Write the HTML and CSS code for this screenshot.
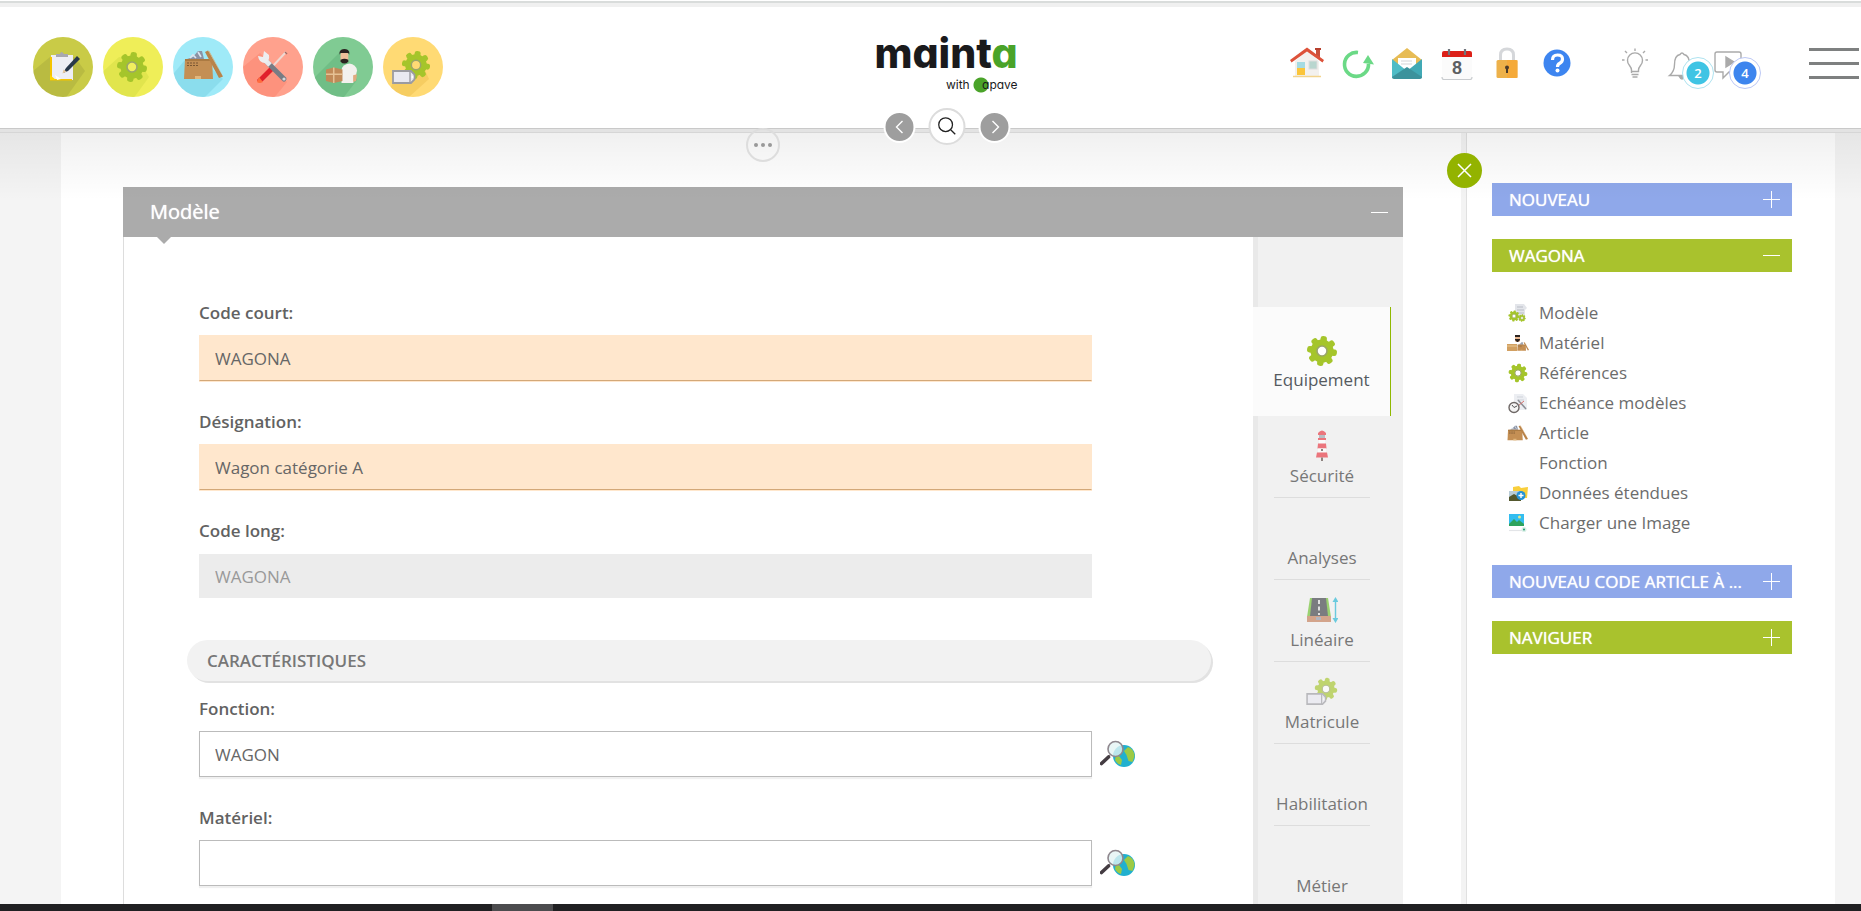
FILE: index.html
```html
<!DOCTYPE html>
<html lang="fr">
<head>
<meta charset="utf-8">
<title>Mainta - Modèle</title>
<link rel="stylesheet" href="styles.css">
</head>
<body>
<svg class="sprite" aria-hidden="true">
  <symbol id="gear" viewBox="0 0 32 32">
    <g fill="#a5c52b">
      <circle cx="16" cy="16" r="11.5"/>
      <g transform="rotate(8 16 16)">
        <rect x="12.8" y="1" width="6.4" height="30" rx="2.6"/>
        <rect x="12.8" y="1" width="6.4" height="30" rx="2.6" transform="rotate(45 16 16)"/>
        <rect x="12.8" y="1" width="6.4" height="30" rx="2.6" transform="rotate(90 16 16)"/>
        <rect x="12.8" y="1" width="6.4" height="30" rx="2.6" transform="rotate(135 16 16)"/>
      </g>
    </g>
    <circle cx="16" cy="16" r="5" fill="var(--hole, #fff)" stroke="#9aa56b" stroke-width="1.6"/>
  </symbol>
  <symbol id="tag" viewBox="0 0 24 14">
    <path d="M1 1h18l3.500 3.500v5L19 13H1z" fill="#e9e9f1" stroke="#9b9ba1" stroke-width="1.8"/>
    <path d="M18 1v12" stroke="#9b9ba1" stroke-width="1.4"/>
    <circle cx="20.500" cy="7" r="1" fill="#fff"/>
  </symbol>
  <symbol id="toolbox" viewBox="0 0 40 30">
    <path d="M4 9l6-2 5-6h4l2 8z" fill="#8a93a5"/>
    <path d="M7 8l3-3 3 3M15 2l3 5" stroke="#dfe5ee" stroke-width="1.6" fill="none"/>
    <path d="M2 9h27l1 20H1z" fill="#c48f54"/>
    <path d="M2 9h27v2H2z" fill="#ab7a42"/>
    <path d="M4 13h12M4 15.500h12" stroke="#7a5733" stroke-width="1.200" stroke-dasharray="2 1"/>
    <rect x="12" y="26" width="6" height="3" fill="#e2b77d"/>
    <path d="M22 2l3-1.500 15 26-4 1.500z" fill="#b98349"/>
    <path d="M25 .5l1.500 1L40 26z" fill="#d8a76a"/>
  </symbol>
  <symbol id="worker" viewBox="0 0 34 36">
    <path d="M17 35V21q1-5 8-6 7 1 8 7l-2 9-2 4z" fill="#f3f1ee"/>
    <path d="M29 27l4-1-1 7-3 1z" fill="#e0ab80"/>
    <rect x="16" y="3" width="8" height="11" rx="3" fill="#efc09a"/>
    <path d="M15 6V3q1-3 5-3t5 3v3l-1-2h-8z" fill="#2b2320"/>
    <path d="M16 11q4-2 8 0v2q-4 4-8 0z" fill="#2b2320"/>
    <path d="M1 21l8-2 9 2v12l-9 2-8-2z" fill="#c18a58"/>
    <path d="M1 26h17M9 19v16" stroke="#e6c194" stroke-width="1.600"/>
  </symbol>
  <symbol id="globe-search" viewBox="0 0 36 28">
    <circle cx="24" cy="16" r="11" fill="#21b0cf"/>
    <path d="M24 11l4-4q6 2 6.500 9l-2 6-4-1-2-6zM16 15l3 1 3 4-1 5q-4-1-6-5z" fill="#9cca45"/>
    <circle cx="15.500" cy="9" r="7.500" fill="#e4f4f4" fill-opacity=".8" stroke="#8f878e" stroke-width="1.600"/>
    <path d="M10 15l-3.500 3.500" stroke="#9b9298" stroke-width="1.600"/>
    <path d="M8.500 17l-7 6.500" stroke="#443c42" stroke-width="3.600" stroke-linecap="round"/>
  </symbol>
</svg>

<header class="topbar">
  <nav class="modules" aria-label="Modules">
    <button class="module module-olive" aria-label="Demandes">
      <svg viewBox="0 0 60 60"><path d="M17 20L0 34v28h32l20-28-10-14z" fill="#000" opacity=".08"/><rect x="18" y="18" width="22" height="25" fill="#eeeef4"/><path d="M17 20h2v22h20v1.500H17z" fill="#f5c400"/><path d="M17 38l6 5h-6z" fill="#ffd500"/><path d="M22 38l6 4-4 1z" fill="#fff"/><path d="M23 19v-2h4q1-4 4 0h4v3H23z" fill="#a8a8b0"/><path d="M30 36l3-5 11-12 3 3-12 12z" fill="#29384a"/><path d="M29.500 36.500l1-4 3 2z" fill="#e6c79c"/></svg>
    </button>
    <button class="module module-yellow" aria-label="Equipements">
      <svg viewBox="0 0 60 60"><path d="M16 20L-4 38v24h34l16-22-10-16z" fill="#7aa800" opacity=".12"/><use href="#gear" x="13" y="14" width="32" height="32"/></svg>
    </button>
    <button class="module module-cyan" aria-label="Articles">
      <svg viewBox="0 0 60 60"><path d="M11 24L-4 42l30 24 24-24-20-18z" fill="#0085a8" opacity=".12"/><use href="#toolbox" x="10" y="13" width="40" height="30"/></svg>
    </button>
    <button class="module module-red" aria-label="Interventions">
      <svg viewBox="0 0 60 60"><path d="M17 16L0 30v32h30l14-17z" fill="#f03c1c" opacity=".14"/><path d="M43 15L29 30" stroke="#efd9d2" stroke-width="2"/><path d="M44 17l-2-2" stroke="#a36a62" stroke-width="1.500"/><path d="M28 29l3 4-11 11q-4 3-6-1z" fill="#e11f2c"/><path d="M16 40l4 5q-4 2-6 0z" fill="#ff6b3d"/><path d="M22 23l19 19" stroke="#777c84" stroke-width="5" stroke-linecap="round"/><path d="M22 23l5 5" stroke="#e8eaed" stroke-width="5"/><path d="M15 19q1 7 7 7 5-2 4-8l-5-4-1 6z" fill="#edeef0"/><circle cx="41" cy="42" r="1.600" fill="#d5d8dc"/></svg>
    </button>
    <button class="module module-green" aria-label="Ressources">
      <svg viewBox="0 0 60 60"><path d="M27 15L-2 44l30 20 16-21-8-18z" fill="#005f2c" opacity=".12"/><use href="#worker" x="12" y="12" width="33" height="35"/></svg>
    </button>
    <button class="module module-amber" aria-label="Matricules">
      <svg viewBox="0 0 60 60"><path d="M11 44l-9 16h24l20-18-10-22z" fill="#c98b00" opacity=".16"/><use href="#gear" x="18" y="13" width="30" height="30"/><use href="#tag" x="9" y="33" width="24" height="14"/></svg>
    </button>
  </nav>

  <a class="logo" href="#" aria-label="Mainta with Apave">
    <span class="logo-name">maint<b>a</b></span>
    <span class="logo-sub">with <span class="apave">apave</span></span>
  </a>

  <nav class="tools" aria-label="Outils">
    <div class="tool-group">
      <a href="#" aria-label="Accueil"><svg viewBox="0 0 36 36"><path d="M6 16L18 6l12 10v15H6z" fill="#f3f1ee"/><path d="M27 5h4v8l-4-3z" fill="#c8503c"/><path d="M1 15L18 2.500 35 15l-1.500 2.500L18 6.500 2.500 17.500z" fill="#dd523a"/><rect x="26" y="3" width="6" height="2" fill="#b7402e"/><rect x="8" y="17" width="8" height="13" fill="#fbc53a"/><rect x="8" y="17" width="8" height="6" fill="#a5dbe2"/><rect x="20" y="16" width="8" height="8" fill="#b9d6cf" stroke="#ddd" stroke-width="1"/><path d="M4 31.500h28" stroke="#f3d48c" stroke-width="1.500"/></svg></a>
      <a href="#" aria-label="Actualiser"><svg viewBox="0 0 36 36"><path d="M19 7.500A12 12 0 1 0 29.500 19" fill="none" stroke="#6bd986" stroke-width="3.600"/><path d="M29 10l6 9.500-11-1.500z" fill="#6bd986"/></svg></a>
      <a href="#" aria-label="Messages"><svg viewBox="0 0 36 36"><path d="M3 15L18 3l15 12v4H3z" fill="#e7bc55"/><path d="M9 13h18v13H9z" fill="#fff"/><path d="M12 16h11M12 19h11" stroke="#d5d5d8" stroke-width="1.200"/><path d="M3 14l15 12L3 33z" fill="#4ebcc6"/><path d="M33 14L18 26l15 7z" fill="#41a9b5"/><path d="M3 32l15-10 15 10q0 2-2 2H5q-2 0-2-2z" fill="#3c929c"/></svg></a>
      <a href="#" aria-label="Calendrier"><svg viewBox="0 0 36 36"><path d="M3 11h30v22q0 1.500-2 1.500H5q-2 0-2-1.500z" fill="#fbfbfb"/><path d="M3 32q0 2.500 2 2.500h26q2 0 2-2.500" fill="none" stroke="#c9cccf" stroke-width="1.200"/><path d="M3 12V8q0-2 2-2h26q2 0 2 2v4z" fill="#dc2018"/><path d="M10 4v6M26 4v6" stroke="#70757c" stroke-width="2.200"/><text x="18" y="29" class="cal-day">8</text></svg></a>
      <a href="#" aria-label="Verrouiller"><svg viewBox="0 0 36 36"><path d="M11.500 17V10q0-6 6.500-6t6.500 6v7" fill="none" stroke="#d5d7da" stroke-width="3"/><rect x="7.500" y="15" width="21" height="18" rx="1.500" fill="#edb14a"/><path d="M18 15h10.500v18H18z" fill="#f8a733" opacity=".7"/><circle cx="18" cy="22.500" r="2" fill="#4b3b2a"/><path d="M17 22h2v6h-2z" fill="#4b3b2a"/></svg></a>
      <a href="#" aria-label="Aide"><svg viewBox="0 0 36 36"><circle cx="18" cy="18" r="13.500" fill="#3d85f0"/><path d="M13.500 15q0-5 5-5t5 4q0 3-3 4.500-2 1-2 3.500" fill="none" stroke="#fff" stroke-width="3.200"/><circle cx="18.500" cy="25.500" r="2" fill="#fff"/></svg></a>
    </div>
    <div class="tool-group notices">
      <a href="#" aria-label="Astuces"><svg viewBox="0 0 36 36" class="line"><path d="M14.500 28v-3q0-2-2-4.500a7.500 7.500 0 1 1 11 0q-2 2.500-2 4.500v1.500h-7M14.500 29.500h7M15.500 32h5"/><path d="M18 3.500v2.500M8 6l2 2M28 6l-2 2M5 15h2.500M28.500 15H31"/></svg></a>
      <a href="#" aria-label="2 notifications"><svg viewBox="0 0 36 36" class="line"><path d="M5.500 30.500h25q-5-4-5-11 0-9-5.500-10-2-3-4 0-5.500 1-5.500 10 0 7-5 11z"/><path d="M15 31q3 6 6 0z" fill="#aaa"/></svg><span class="badge badge-cyan">2</span></a>
      <a href="#" aria-label="4 messages vidéo"><svg viewBox="0 0 36 36" class="line"><path d="M6 7h22q2 0 2 2v16q0 2-2 2H18l-6 6v-6H6q-2 0-2-2V9q0-2 2-2z"/><path d="M15 12l8 5-8 5z" fill="#aaa"/></svg><span class="badge badge-blue">4</span></a>
    </div>
    <button class="burger" aria-label="Menu"><span></span><span></span><span></span></button>
  </nav>

  <div class="pager">
    <button class="pager-btn" aria-label="Précédent"><svg viewBox="0 0 28 28"><path d="M17 8l-6 6 6 6"/></svg></button>
    <button class="search-btn" aria-label="Rechercher"><svg viewBox="0 0 36 36"><circle cx="16.500" cy="16" r="7.500"/><path d="M22 21.500l5 5"/></svg></button>
    <button class="pager-btn" aria-label="Suivant"><svg viewBox="0 0 28 28"><path d="M12 8l6 6-6 6"/></svg></button>
  </div>
</header>

<div class="page">
  <main class="content">
    <button class="more" aria-label="Plus d'actions"><i></i><i></i><i></i></button>
    <section class="panel">
      <div class="panel-head"><h1>Modèle</h1><button class="toggle minus" aria-label="Réduire"></button></div>
      <div class="panel-body">
        <form class="form">
          <div class="field required"><label for="code">Code court:</label><input id="code" type="text" value="WAGONA"></div>
          <div class="field required"><label for="designation">Désignation:</label><input id="designation" type="text" value="Wagon catégorie A"></div>
          <div class="field"><label for="long">Code long:</label><input id="long" type="text" value="WAGONA" disabled></div>
          <h2 class="section">CARACTÉRISTIQUES</h2>
          <div class="field"><label for="fonction">Fonction:</label><input id="fonction" type="text" value="WAGON"><button type="button" class="lookup" aria-label="Rechercher une fonction"><svg viewBox="0 0 36 28"><use href="#globe-search"/></svg></button></div>
          <div class="field"><label for="materiel">Matériel:</label><input id="materiel" type="text" value=""><button type="button" class="lookup" aria-label="Rechercher un matériel"><svg viewBox="0 0 36 28"><use href="#globe-search"/></svg></button></div>
        </form>
        <nav class="tabs" aria-label="Onglets">
          <a href="#" class="tab active"><span class="tab-icon"><svg viewBox="0 0 32 32"><use href="#gear"/></svg></span>Equipement</a>
          <a href="#" class="tab"><span class="tab-icon"><svg viewBox="0 0 32 32"><path d="M12 4q4-5 8 0v2h-8z" fill="#e8343f"/><path d="M13 6h6v3h-6z" fill="#9aa3ad"/><path d="M12 9h8v2h-8z" fill="#e8343f"/><path d="M13 11h6v4h-6z" fill="#fff"/><path d="M12 14.500h8l.5 5h-9z" fill="#e8343f"/><path d="M12 19.500h8v4h-8z" fill="#fff"/><path d="M11 23.500h10l1 5H10z" fill="#e8343f"/><path d="M15 20h2v2h-2zM15 28.500h2V32h-2z" fill="#5b4a45"/></svg></span>Sécurité</a>
          <a href="#" class="tab"><span class="tab-icon"></span>Analyses</a>
          <a href="#" class="tab"><span class="tab-icon"><svg viewBox="0 0 32 32"><path d="M4 5h18l3 19H1z" fill="#6cc12c"/><path d="M6 5h14l2 18H4z" fill="#3c3f44"/><path d="M13 7v15" stroke="#fff" stroke-width="1.600" stroke-dasharray="4 2.500"/><path d="M1 23h24v6H1z" fill="#c47b55"/><path d="M10 24h5v3h-5z" fill="#9198a6"/><path d="M29.500 8v17" stroke="#22b6d4" stroke-width="1.400"/><path d="M26.500 9l3-5 3 5zM26.500 25l3 5 3-5z" fill="#22b6d4"/></svg></span>Linéaire</a>
          <a href="#" class="tab"><span class="tab-icon"><svg viewBox="0 0 32 32"><use href="#gear" x="8" y="2" width="24" height="24"/><use href="#tag" x="0" y="18" width="21" height="12"/></svg></span>Matricule</a>
          <a href="#" class="tab"><span class="tab-icon"></span>Habilitation</a>
          <a href="#" class="tab"><span class="tab-icon"></span>Métier</a>
        </nav>
      </div>
    </section>
  </main>

  <aside class="side">
    <button class="close" aria-label="Fermer"><svg viewBox="0 0 35 35"><path d="M11 11l13 13M24 11L11 24"/></svg></button>
    <button class="bar blue"><span>NOUVEAU</span><i class="toggle plus"></i></button>
    <button class="bar green"><span>WAGONA</span><i class="toggle minus"></i></button>
    <ul class="links">
      <li><a href="#"><svg viewBox="0 0 22 22"><path d="M8 2h9l3 4-2 2v10H8z" fill="#e3e5ea"/><path d="M10 5h6M10 8h7M10 11h7" stroke="#b9bdc6" stroke-width="1"/><use href="#gear" x="1" y="8" width="12" height="12"/><use href="#gear" x="11" y="12" width="8" height="8"/></svg>Modèle</a></li>
      <li><a href="#"><svg viewBox="0 0 22 22"><rect x="8" y="3" width="5" height="7" rx="1.500" fill="#e8b68f"/><path d="M8 5V3h5v2zM8 7h5v1l-2 2h-1L8 8z" fill="#2b2320"/><path d="M0 12h10v7H0z" fill="#d2a061"/><path d="M0 14h10" stroke="#eac892"/><use href="#toolbox" x="10" y="10" width="12" height="9"/></svg>Matériel</a></li>
      <li><a href="#"><svg viewBox="0 0 22 22"><use href="#gear" x="1" y="1" width="20" height="20"/></svg>Références</a></li>
      <li><a href="#"><svg viewBox="0 0 22 22"><path d="M7 2h9l4 4v12H7z" fill="#eceef2"/><path d="M10 5h6M10 8h7" stroke="#cfd3da"/><path d="M11 8l8 9" stroke="#8d8f96" stroke-width="1.500"/><path d="M17 9l-6 5" stroke="#d9716d" stroke-width="1"/><circle cx="7" cy="15.500" r="5" fill="#f4f4f4" stroke="#6e6866" stroke-width="1.400"/><path d="M5 13l2 2.500 3-1.500" fill="none" stroke="#555"/></svg>Echéance modèles</a></li>
      <li><a href="#"><svg viewBox="0 0 22 22"><use href="#toolbox" x="0" y="3" width="21" height="16"/></svg>Article</a></li>
      <li><a href="#"><svg viewBox="0 0 22 22"></svg>Fonction</a></li>
      <li><a href="#"><svg viewBox="0 0 22 22"><path d="M6 5l6-1 2 2 7-1-1 11H6z" fill="#f9cf3c"/><rect x="2" y="9" width="12" height="10" fill="#b9cdd8"/><path d="M2 15l5-3 7 4v3H2z" fill="#54582e"/><circle cx="14" cy="13.500" r="4.500" fill="#2492d6"/><path d="M14 11v5M11.500 13.500h5" stroke="#fff" stroke-width="1.400"/></svg>Données étendues</a></li>
      <li><a href="#"><svg viewBox="0 0 22 22"><path d="M2 2h15v12H2z" fill="#33bdf0"/><path d="M2 14v-2l5-5 3 3 2-2 5 4v2z" fill="#2fa35c"/><circle cx="12.500" cy="5" r="1.500" fill="#e4e98a"/><path d="M2 18.500h13" stroke="#e3e5e8" stroke-width="1.200"/><circle cx="17" cy="17.500" r="2.500" fill="#d9efe6"/><circle cx="17" cy="17.500" r="1" fill="#1f9c70"/></svg>Charger une Image</a></li>
    </ul>
    <button class="bar blue"><span>NOUVEAU CODE ARTICLE À ...</span><i class="toggle plus"></i></button>
    <button class="bar green"><span>NAVIGUER</span><i class="toggle plus"></i></button>
  </aside>
</div>
<footer class="strip"><span></span></footer>
</body>
</html>
```

FILE: styles.css
```css
* { box-sizing: border-box; }

body {
  margin: 0;
  height: 100vh;
  overflow: hidden;
  display: grid;
  grid-template-rows: auto minmax(0, 1fr) 7px;
  font: 17px/24px "Open Sans", "Noto Sans", sans-serif;
  color: #666;
  background: #f4f4f4;
}

button, input { font: inherit; color: inherit; }
button { padding: 0; border: 0; background: none; cursor: pointer; }
a { color: inherit; text-decoration: none; }
svg { display: block; }
h1, h2, ul { margin: 0; padding: 0; font: inherit; list-style: none; }
.sprite { position: absolute; width: 0; height: 0; }

/* Header */
.topbar {
  position: relative;
  z-index: 2;
  height: 129px;
  display: grid;
  grid-template-columns: 1fr auto 1fr;
  align-items: center;
  padding: 6px 2px 0 33px;
  background: linear-gradient(#fff 1px, #d9dcdb 1px, #d9dcdb 3px, #f0f0f0 3px, #f0f0f0 7px, #fff 7px);
  border-bottom: 1px solid #c9c9c9;
  box-shadow: 0 4px 0 #e3e3e3;
}
.topbar::after {
  content: "";
  position: absolute;
  left: 0;
  right: 0;
  top: 132px;
  height: 68px;
  background: linear-gradient(rgba(0, 0, 0, .06), transparent);
  pointer-events: none;
}
.modules { display: flex; gap: 10px; }
.module { width: 60px; height: 60px; border-radius: 50%; overflow: hidden; }
.module svg { width: 60px; height: 60px; }
.module-olive { background: #c9cb47; }
.module-yellow { background: #efee58; --hole: #f1ef5f; }
.module-cyan { background: #9feaf8; }
.module-red { background: #ffa18d; }
.module-green { background: #80cb93; }
.module-amber { background: #ffda74; --hole: #ffda74; }

.logo { display: flex; flex-direction: column; padding-bottom: 13px; color: #1a1a1c; }
.logo-name {
  font: 800 41px/48px Inter, "Open Sans", sans-serif;
  font-feature-settings: "cv11";
}
.logo-name b { font-weight: inherit; color: #4aa329; }
.logo-sub {
  align-self: flex-end;
  font: 12px/16px Inter, sans-serif;
  font-feature-settings: "cv11";
}
.apave {
  display: inline-block;
  padding-left: 9px;
  background: radial-gradient(circle at 8px 8px, #4aa329 7px, transparent 8px);
}

.tools { display: flex; justify-content: flex-end; align-items: center; padding-bottom: 8px; }
.tool-group { display: flex; gap: 14px; }
.tool-group a { position: relative; }
.tool-group svg { width: 36px; height: 36px; }
.notices { gap: 11px; margin: 0 62px 0 42px; }
.line { fill: none; stroke: #aaa; stroke-width: 1.4; }
.cal-day { font: 700 18px "Liberation Sans", sans-serif; text-anchor: middle; fill: #5d5f63; }
.badge {
  position: absolute;
  left: 18px;
  top: 12px;
  width: 32px;
  height: 32px;
  border: 1px solid;
  border-radius: 50%;
  background: radial-gradient(circle, var(--fill) 11px, #fff 12px);
  color: #fff;
  font: 600 13px/30px "Open Sans", sans-serif;
  text-align: center;
}
.badge-cyan { --fill: #3fc4e4; border-color: #aee3f0; }
.badge-blue { --fill: #3d85ee; border-color: #bcc8f5; }
.burger { display: grid; gap: 11px; width: 50px; }
.burger span { height: 3px; background: #7e8080; }

.pager {
  position: absolute;
  z-index: 1;
  left: calc(50% + 16px);
  bottom: -17px;
  transform: translateX(-50%);
  display: flex;
  align-items: center;
  gap: 13px;
}
.pager-btn {
  width: 32px;
  height: 32px;
  border: 2px solid #fff;
  border-radius: 50%;
  background: #9e9e9e;
}
.search-btn {
  width: 37px;
  height: 37px;
  border: 2px solid #dcdcdc;
  border-radius: 50%;
  background: #fff;
}
.pager svg { width: 100%; fill: none; stroke: #fff; stroke-width: 1.4; }
.pager .search-btn svg { stroke: #222; }

/* Page */
.page {
  min-height: 0;
  display: flex;
  margin: 0 26px 0 61px;
  background: #fff;
}
.content { flex: 1; padding: 0 58px 0 62px; }
.more {
  position: relative;
  z-index: 3;
  display: flex;
  align-items: center;
  justify-content: center;
  gap: 3px;
  width: 34px;
  height: 34px;
  margin: -1px auto 25px;
  border: 2px solid #ddd;
  border-radius: 50%;
}
.more i { width: 4px; height: 4px; border-radius: 50%; background: #999; }

.panel-head {
  position: relative;
  display: flex;
  align-items: center;
  justify-content: space-between;
  height: 50px;
  padding: 0 15px 0 27px;
  background: #ababab;
  color: #fff;
}
.panel-head::after {
  content: "";
  position: absolute;
  left: 34px;
  top: 50px;
  border: 7px solid transparent;
  border-top-color: #ababab;
  border-bottom: 0;
}
.panel-head h1 { font-size: 20px; text-shadow: 0 0 1px #fff; }
.panel-body { display: flex; border-left: 1px solid #ddd; }

.toggle { width: 17px; height: 17px; flex: none; }
.minus { background: linear-gradient(#fff, #fff) center / 17px 1px no-repeat; }
.plus {
  background:
    linear-gradient(#fff, #fff) center / 17px 1px no-repeat,
    linear-gradient(#fff, #fff) center / 1px 17px no-repeat;
}

.form { flex: 1; padding: 64px 42px 0 63px; }
.field {
  display: grid;
  grid-template-columns: 1fr 111px;
  gap: 10px 8px;
  align-items: center;
  padding-left: 12px;
  margin-bottom: 29px;
}
.field label {
  grid-column: 1 / -1;
  font-weight: 600;
  color: #626262;
  justify-self: start;
}
.field input {
  height: 46px;
  min-width: 0;
  padding: 0 15px;
  border: 1px solid #bbb;
  border-radius: 0;
  background: #fff;
  box-shadow: 0 2px 1px #f0f0f0;
  outline: 0;
}
.field.required input {
  border-color: #ffe7cd;
  border-bottom-color: #d3a878;
  background: #ffe7cd;
  box-shadow: 0 1px 0 #ffe7cd;
}
.field input:disabled {
  height: 44px;
  margin-top: 1px;
  border-color: #ececec;
  background: #ececec;
  color: #999;
  box-shadow: none;
}
.lookup { justify-self: start; }
.lookup svg { width: 36px; height: 28px; }

.section {
  height: 41px;
  margin: 42px 0 16px;
  padding: 0 20px;
  border-radius: 21px;
  background: #f2f2f2;
  box-shadow: 2px 2px 0 #e2e2e2;
  font-weight: 600;
  line-height: 41px;
  color: #777;
}

.tabs {
  width: 150px;
  padding-top: 70px;
  background: linear-gradient(90deg, #e9e9e9 5px, #f1f1f1 5px);
}
.tab {
  display: flex;
  flex-direction: column;
  align-items: center;
  gap: 3px;
  width: 96px;
  height: 82px;
  margin-left: 21px;
  padding-top: 13px;
  border-bottom: 1px solid #ddd;
  color: #777;
}
.tab.active {
  gap: 1px;
  width: 138px;
  height: 109px;
  margin-left: 0;
  padding-top: 28px;
  border-bottom: 0;
  border-right: 1px solid #8fb800;
  background: #fbfbfb;
  color: #555a60;
}
.tab-icon { height: 32px; opacity: .65; }
.tab.active .tab-icon { opacity: 1; }
.tab-icon svg { width: 32px; height: 32px; }

/* Side menu */
.side {
  position: relative;
  width: 374px;
  padding: 54px 43px 0 26px;
  border-left: 5px solid #f3f3f3;
  box-shadow: inset 1px 0 0 #e0e0e0;
}
.close {
  position: absolute;
  z-index: 3;
  left: -19px;
  top: 24px;
  width: 35px;
  height: 35px;
  border-radius: 50%;
  background: #93b300;
}
.close svg { fill: none; stroke: #fff; stroke-width: 1.5; }
.bar {
  display: flex;
  align-items: center;
  justify-content: space-between;
  width: 100%;
  height: 33px;
  margin-bottom: 23px;
  padding: 0 12px 0 17px;
  color: #fff;
  text-shadow: 0 0 1px #fff;
}
.bar.blue { background: #8fa8ea; }
.bar.green { background: #a9c22d; }
.links { margin: 26px 0 27px 15px; }
.links a { display: flex; align-items: center; gap: 10px; height: 30px; color: #6c6c6c; }
.links svg { width: 22px; height: 22px; }

.strip { z-index: 3; background: #202022; }
.strip span { display: block; width: 61px; height: 7px; margin-left: 492px; background: #4c4c4e; }
```
